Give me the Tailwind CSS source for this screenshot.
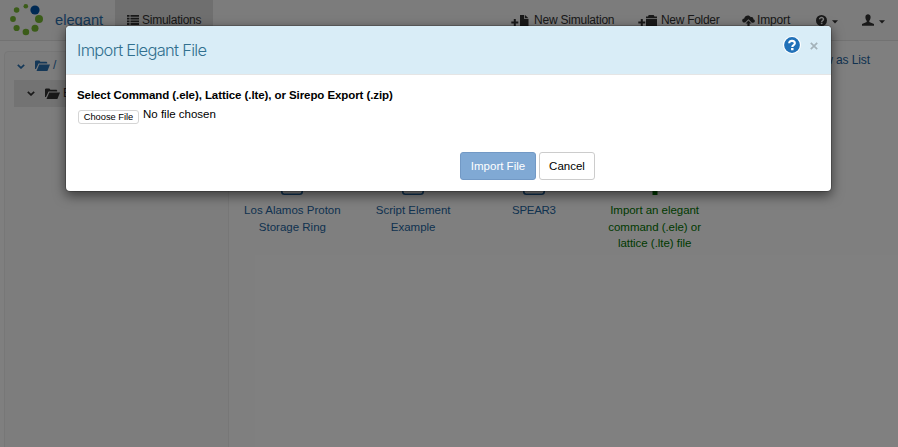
<!DOCTYPE html>
<html lang="en">
<head>
<meta charset="utf-8">
<title>elegant</title>
<script src="https://cdn.jsdelivr.net/npm/@tailwindcss/browser@4"></script>
</head>
<body class="relative h-[447px] w-[898px] overflow-hidden bg-white font-['Liberation_Sans',Arial,sans-serif] text-[11.5px] leading-[16.4px] text-[#333]">
<svg class="hidden">
  <symbol id="folder" viewBox="0 0 15 11"><path d="M0 9V1.2L.8.4h3.6l1 1.3h6.1l.7.8v1H3.6L1 9z"/><path d="M4.2 4.5H15L12.4 11H1.5z"/></symbol>
  <symbol id="doc" viewBox="0 0 22 18"><rect x=".8" y="1" width="20.400" height="16.200" rx="2.5" fill="none" stroke="currentColor" stroke-width="1.6"/></symbol>
  <symbol id="chev" viewBox="0 0 8 5"><path d="M.8.9 4 3.9 7.2.9" fill="none" stroke="currentColor" stroke-width="1.7"/></symbol>
  <symbol id="help" viewBox="0 0 16 16"><circle cx="8" cy="8" r="8"/><path d="M5.2 6.2C5.2 2.8 11 2.9 10.9 6.2 10.9 8.2 8.2 8 8.2 10" fill="none" stroke="var(--mark)" stroke-width="2.1"/><path d="M7 11.1h2.4v2.2H7z" fill="var(--mark)"/></symbol>
</svg>

<nav class="flex h-[41px] items-stretch border-b border-[#e4e4e4] bg-[#f8f8f8]">
  <div class="w-[55px] shrink-0 pl-[10px] pt-[3px]">
    <svg width="34" height="34" viewBox="0 0 34 34" fill="#77b832"><circle cx="15.8" cy="3.2" r="2.3"/><circle cx="6.6" cy="7" r="2.8"/><circle cx="3" cy="16" r="2.9"/><circle cx="6.6" cy="25" r="3.1"/><circle cx="15.9" cy="29" r="3.3"/><circle cx="25" cy="25.3" r="3.5"/><circle cx="29" cy="16" r="4"/><circle cx="25" cy="7" r="4.6" fill="#0054a8"/></svg>
  </div>
  <div class="w-[60px] shrink-0 pt-[12px] text-[14.7px] text-[#2a70b0]">elegant</div>
  <div class="flex w-[98px] shrink-0 items-center gap-[3px] bg-[#dedede] pl-[12px]">
    <svg width="12" height="10" viewBox="0 0 12 10" fill="#333"><path d="M0 0h2.5v1.8H0zM3.5 0H12v1.8H3.5zM0 2.7h2.5v1.8H0zM3.5 2.7H12v1.8H3.5zM0 5.4h2.5v1.8H0zM3.5 5.4H12v1.8H3.5zM0 8.1h2.5v1.8H0zM3.5 8.1H12v1.8H3.5z"/></svg>
    <span class="text-[12px] tracking-[-0.25px]">Simulations</span>
  </div>
  <div class="ml-[298px] flex w-[127px] shrink-0 items-center gap-[5px]">
    <svg width="18" height="13" viewBox="0 0 18 13" fill="#333"><path d="M2.8 5h2v2.5h2.5v2H4.8V12h-2V9.500H.3v-2h2.500zM9 1h4.200v4H17.500v8H9zM14 1l3.500 3.200H14z"/></svg>
    <span class="text-[12px] tracking-[-0.22px] whitespace-nowrap">New Simulation</span>
  </div>
  <div class="flex w-[104px] shrink-0 items-center gap-[4px]">
    <svg width="19" height="13" viewBox="0 0 19 13" fill="#333"><path d="M2.800 5h2v2.500h2.500v2H4.800V12h-2V9.500H.3v-2h2.500zM8 2.500h2L10.700 1h5l.8 1.500H19V4H8zM8 4.700h11V13H8z"/></svg>
    <span class="text-[12px] tracking-[-0.3px] whitespace-nowrap">New Folder</span>
  </div>
  <div class="flex w-[74px] shrink-0 items-center gap-[2px]">
    <svg width="13" height="11" viewBox="0 0 13 11" fill="#333"><path d="M1.600 7.600C-.8 6.300.2 3.500 2.200 3.500 2.800.4 7-.8 8.800 2.200c1.700-.4 2.700.7 2.500 2 2.300.6 2 3.400-.2 3.600H9.900L6.500 4.200 3.100 7.600z"/><path d="m6.500 5.400 3 3.200H7.600V11H5.400V8.600H3.500z"/></svg>
    <span class="text-[12px] tracking-[-0.15px]">Import</span>
  </div>
  <div class="flex w-[46px] shrink-0 items-center gap-[5px] [--mark:#f8f8f8]">
    <svg width="11" height="11" fill="#333"><use href="#help"/></svg>
    <svg width="6" height="4" viewBox="0 0 6 4" class="mt-[3px]" fill="#333"><path d="M0 .3h6L3 3.500z"/></svg>
  </div>
  <div class="flex items-center gap-[5px]">
    <svg width="12" height="12" viewBox="0 0 12 12" fill="#333"><path d="M3.400 3C3.400-.8 8.600-.8 8.600 3c0 2-.6 3-1.300 3.800v1.300L12 10v1.700H0V10l4.700-1.900V6.800C4 6 3.400 5 3.400 3z"/></svg>
    <svg width="6" height="4" viewBox="0 0 6 4" class="mt-[3px]" fill="#333"><path d="M0 .3h6L3 3.500z"/></svg>
  </div>
</nav>

<div class="flex">
  <aside class="ml-[4px] mt-[10px] h-[400px] w-[225px] shrink-0 rounded-tl-[4px] rounded-tr-[4px] border border-[#eee] bg-[#fafafa] pl-[9px] pr-[9px]">
    <div class="flex h-[28px] items-center pl-[3px] text-[#2a70b0]">
      <svg width="8" height="5"><use href="#chev"/></svg>
      <svg width="15" height="11" class="mb-[2px] ml-[10px]" fill="currentColor"><use href="#folder"/></svg>
      <span class="mb-[2px] ml-[3px] text-[12px]">/</span>
    </div>
    <div class="flex h-[27px] items-center bg-[#e6e6e6] pl-[13px]">
      <svg width="8" height="5"><use href="#chev"/></svg>
      <svg width="15" height="11" class="ml-[10px]" fill="currentColor"><use href="#folder"/></svg>
      <span class="ml-[3px] text-[12px]">E</span>
    </div>
  </aside>
  <main class="flex w-[669px] flex-col">
    <div class="pr-[28px] pt-[11px] text-right text-[12px] tracking-[-0.1px] text-[#23659f]">View as List</div>
    <div class="mt-[109px] grid w-[486px] grid-cols-4 pl-[3px] text-center text-[#23659f]">
      <div class="flex flex-col items-center gap-[7px]"><svg width="22" height="18"><use href="#doc"/></svg><span>Los Alamos Proton<br>Storage Ring</span></div>
      <div class="flex flex-col items-center gap-[7px]"><svg width="22" height="18"><use href="#doc"/></svg><span>Script Element<br>Example</span></div>
      <div class="flex flex-col items-center gap-[7px] tracking-[-0.3px]"><svg width="22" height="18"><use href="#doc"/></svg><span>SPEAR3</span></div>
      <div class="flex flex-col items-center gap-[7px] tracking-[-0.04px] text-[#007400]"><svg width="24" height="18" fill="currentColor"><path d="M9.500 0h5v18h-5zM2 4h20v5H2z"/></svg><span>Import an elegant<br>command (.ele) or<br>lattice (.lte) file</span></div>
    </div>
  </main>
</div>

<div class="absolute inset-0 bg-black/50"></div>

<section class="absolute left-[65px] top-[25px] h-[167px] w-[767px] overflow-hidden rounded-[5px] border border-black/20 bg-white bg-clip-padding text-black shadow-[0_4px_12px_rgba(0,0,0,0.5)]">
  <header class="flex h-[49px] items-center border-b border-[#e5e5e5] bg-[#d9edf7] pl-[11px] pr-[13px]">
    <h1 class="font-['Inter'] text-[16.5px] font-light tracking-[-0.7px] text-[#31708f]">Import Elegant File</h1>
    <svg width="20" height="20" viewBox="-2 -2 20 20" class="mb-[10px] ml-auto" fill="#2171b8"><circle cx="8" cy="8" r="9" fill="#fff"/><g transform="translate(.4 .4) scale(.95)"><circle cx="8" cy="8" r="8.300"/><path d="M5 6.200C5 2.700 11 2.800 11 6.200c0 1.900-2.700 1.800-2.700 3.900" fill="none" stroke="#fff" stroke-width="2.200"/><path d="M7 11.200h2.600v2.200H7z" fill="#fff"/></g></svg>
    <svg width="8" height="8" viewBox="0 0 8 8" class="mb-[8px] ml-[8px]"><path d="m.8.800 6.400 6.400m0-6.400L.8 7.200" stroke="#a4b2b9" stroke-width="1.700"/></svg>
  </header>
  <div class="pl-[11px] pt-[12px]">
    <div class="text-[11.5px] font-bold tracking-[-0.08px]">Select Command (.ele), Lattice (.lte), or Sirepo Export (.zip)</div>
    <div class="mt-[2px] flex items-start gap-[4px]">
      <button class="ml-[1px] mt-[5px] h-[14px] w-[61px] rounded-[3px] border border-[#d5d5d5] bg-white text-[9.3px] leading-[12px]">Choose File</button>
      <span class="mt-px">No file chosen</span>
    </div>
    <div class="ml-[383px] mt-[28px] flex gap-[3px]">
      <button class="h-[28px] w-[76px] rounded-[3px] border border-[#7299c5] bg-[#80a9d4] text-white">Import File</button>
      <button class="h-[28px] w-[56px] rounded-[3px] border border-[#ccc] bg-white">Cancel</button>
    </div>
  </div>
</section>
</body>
</html>
